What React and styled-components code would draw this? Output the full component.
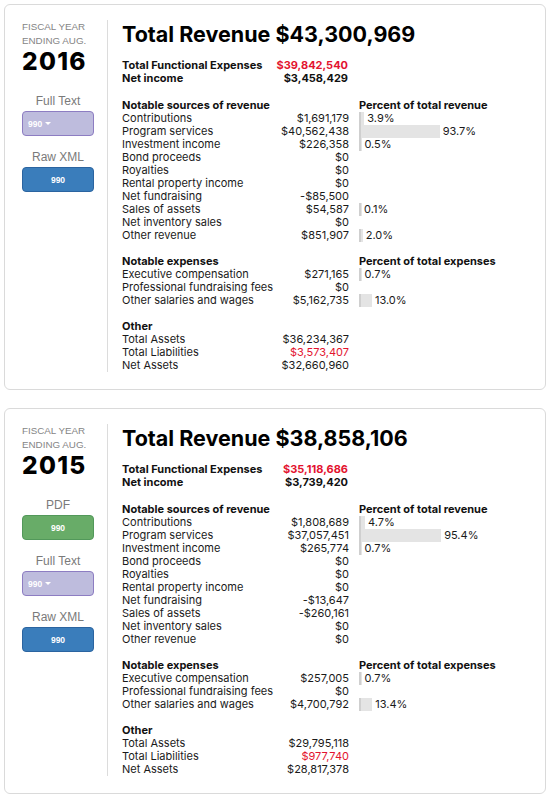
import React from 'react';
import styled, { createGlobalStyle } from 'styled-components';

const GlobalStyle = createGlobalStyle`
  html, body { margin: 0; padding: 0; background: #fff; }
  body { font-family: Inter, "Liberation Sans", Arial, sans-serif; color: #111; }
`;

const filings = [
  {
    year: '2016',
    links: [
      { label: 'Full Text', kind: 'purple', caret: true },
      { label: 'Raw XML', kind: 'blue' },
    ],
    revenue: '$43,300,969',
    expenses: '$39,842,540',
    net: '$3,458,429',
    sources: [
      ['Contributions', '$1,691,179', 3.9],
      ['Program services', '$40,562,438', 93.7],
      ['Investment income', '$226,358', 0.5],
      ['Bond proceeds', '$0'],
      ['Royalties', '$0'],
      ['Rental property income', '$0'],
      ['Net fundraising', '-$85,500'],
      ['Sales of assets', '$54,587', 0.1],
      ['Net inventory sales', '$0'],
      ['Other revenue', '$851,907', 2.0],
    ],
    costs: [
      ['Executive compensation', '$271,165', 0.7],
      ['Professional fundraising fees', '$0'],
      ['Other salaries and wages', '$5,162,735', 13.0],
    ],
    other: [
      ['Total Assets', '$36,234,367'],
      ['Total Liabilities', '$3,573,407', null, true],
      ['Net Assets', '$32,660,960'],
    ],
  },
  {
    year: '2015',
    links: [
      { label: 'PDF', kind: 'green' },
      { label: 'Full Text', kind: 'purple', caret: true },
      { label: 'Raw XML', kind: 'blue' },
    ],
    revenue: '$38,858,106',
    expenses: '$35,118,686',
    net: '$3,739,420',
    sources: [
      ['Contributions', '$1,808,689', 4.7],
      ['Program services', '$37,057,451', 95.4],
      ['Investment income', '$265,774', 0.7],
      ['Bond proceeds', '$0'],
      ['Royalties', '$0'],
      ['Rental property income', '$0'],
      ['Net fundraising', '-$13,647'],
      ['Sales of assets', '-$260,161'],
      ['Net inventory sales', '$0'],
      ['Other revenue', '$0'],
    ],
    costs: [
      ['Executive compensation', '$257,005', 0.7],
      ['Professional fundraising fees', '$0'],
      ['Other salaries and wages', '$4,700,792', 13.4],
    ],
    other: [
      ['Total Assets', '$29,795,118'],
      ['Total Liabilities', '$977,740', null, true],
      ['Net Assets', '$28,817,378'],
    ],
  },
];

const palette = {
  purple: { bg: '#bebcdd', border: '#8d7dc2' },
  blue: { bg: '#3a7dbb', border: '#2b64a0' },
  green: { bg: '#68ac68', border: '#52985a' },
};

const Page = styled.div`
  display: flex;
  flex-direction: column;
  gap: 18px;
  padding: 4px 6px 0 4px;
`;

const Card = styled.section`
  display: flex;
  border: 1px solid #dadada;
  border-radius: 6px;
  padding: 15px 14px 17px 17px;
`;

const Side = styled.div`
  width: 72px;
  padding-right: 13px;
  border-right: 1px solid #dcdcdc;
  display: flex;
  flex-direction: column;
  font-family: "Liberation Sans", Arial, sans-serif;
`;

const Fiscal = styled.div`
  font-size: 9.8px;
  line-height: 13.5px;
  color: #858585;
  text-transform: uppercase;
`;

const Year = styled.div`
  font-family: Inter, "Liberation Sans", sans-serif;
  font-weight: 800;
  font-size: 24.5px;
  line-height: 28px;
  letter-spacing: 1.3px;
  color: #000;
`;

const LinkGroup = styled.div`
  margin-top: ${(p) => (p.$first ? '18px' : '13px')};
  display: flex;
  flex-direction: column;
`;

const LinkLabel = styled.div`
  text-align: center;
  font-size: 12px;
  line-height: 16px;
  color: #7a7a7a;
  margin-bottom: 2px;
`;

const FileButton = styled.a`
  box-sizing: border-box;
  height: 25px;
  display: flex;
  align-items: center;
  justify-content: ${(p) => (p.$caret ? 'flex-start' : 'center')};
  gap: 3px;
  padding: 0 5px;
  border-radius: 4px;
  background: ${(p) => palette[p.$kind].bg};
  border: 1px solid ${(p) => palette[p.$kind].border};
  color: #fff;
  font-size: 8.5px;
  font-weight: bold;
  text-decoration: none;
`;

const Caret = styled.span`
  width: 0;
  height: 0;
  border-left: 3px solid transparent;
  border-right: 3px solid transparent;
  border-top: 3px solid #fff;
`;

const Main = styled.div`
  flex: 1;
  padding-left: 14px;
  display: flex;
  flex-direction: column;
`;

const Title = styled.h1`
  margin: 0;
  font-size: 21.5px;
  line-height: 28px;
  font-weight: 700;
  color: #000;
`;

const Summary = styled.div`
  margin-top: 11px;
  display: grid;
  grid-template-columns: 150px 76px;
  font-size: 11px;
  line-height: 13px;
  font-weight: 700;
  color: #111;
`;

const Amount = styled.div`
  text-align: right;
  color: ${(p) => (p.$red ? '#e3132f' : 'inherit')};
`;

const Section = styled.div`
  margin-top: ${(p) => p.$gap || '13px'};
  display: grid;
  grid-template-columns: 150px 77px 1fr;
  font-size: 11px;
  line-height: 13px;
  color: #1a1a1a;
`;

const Head = styled.div`
  grid-column: ${(p) => p.$col};
  font-weight: 650;
  color: #111;
  padding-left: ${(p) => (p.$pct ? '10px' : '0')};
`;

const Label = styled.div`
  white-space: nowrap;
`;

const PctCell = styled.div`
  padding-left: 10px;
  display: flex;
  height: 13px;
`;

const Bar = styled.div`
  display: flex;
  align-items: center;
  border-left: 2px solid #cfcfcf;
`;

const Fill = styled.div`
  align-self: stretch;
  background: #e4e4e4;
`;

const PctText = styled.span`
  margin-left: 3px;
`;

function Rows({ rows, pctHead, title, gap }) {
  return (
    <Section $gap={gap}>
      <Head $col="1 / 3">{title}</Head>
      <Head $col="3" $pct>{pctHead || ''}</Head>
      {rows.map(([label, value, pct, red]) => (
        <React.Fragment key={label}>
          <Label>{label}</Label>
          <Amount $red={red}>{value}</Amount>
          <PctCell>
            {pct != null && (
              <Bar>
                <Fill style={{ width: `${pct * 0.84}px` }} />
                <PctText>{pct.toFixed(1)}%</PctText>
              </Bar>
            )}
          </PctCell>
        </React.Fragment>
      ))}
    </Section>
  );
}

function FilingCard({ f }) {
  return (
    <Card>
      <Side>
        <Fiscal>Fiscal year<br />ending Aug.</Fiscal>
        <Year>{f.year}</Year>
        {f.links.map((l, i) => (
          <LinkGroup key={l.label} $first={i === 0}>
            <LinkLabel>{l.label}</LinkLabel>
            <FileButton href="#" $kind={l.kind} $caret={l.caret}>
              990
              {l.caret && <Caret />}
            </FileButton>
          </LinkGroup>
        ))}
      </Side>
      <Main>
        <Title>Total Revenue {f.revenue}</Title>
        <Summary>
          <div>Total Functional Expenses</div>
          <Amount $red>{f.expenses}</Amount>
          <div>Net income</div>
          <Amount>{f.net}</Amount>
        </Summary>
        <Rows title="Notable sources of revenue" pctHead="Percent of total revenue" rows={f.sources} gap="14px" />
        <Rows title="Notable expenses" pctHead="Percent of total expenses" rows={f.costs} />
        <Rows title="Other" rows={f.other} />
      </Main>
    </Card>
  );
}

export default function App() {
  return (
    <>
      <GlobalStyle />
      <Page>
        {filings.map((f) => (
          <FilingCard key={f.year} f={f} />
        ))}
      </Page>
    </>
  );
}
